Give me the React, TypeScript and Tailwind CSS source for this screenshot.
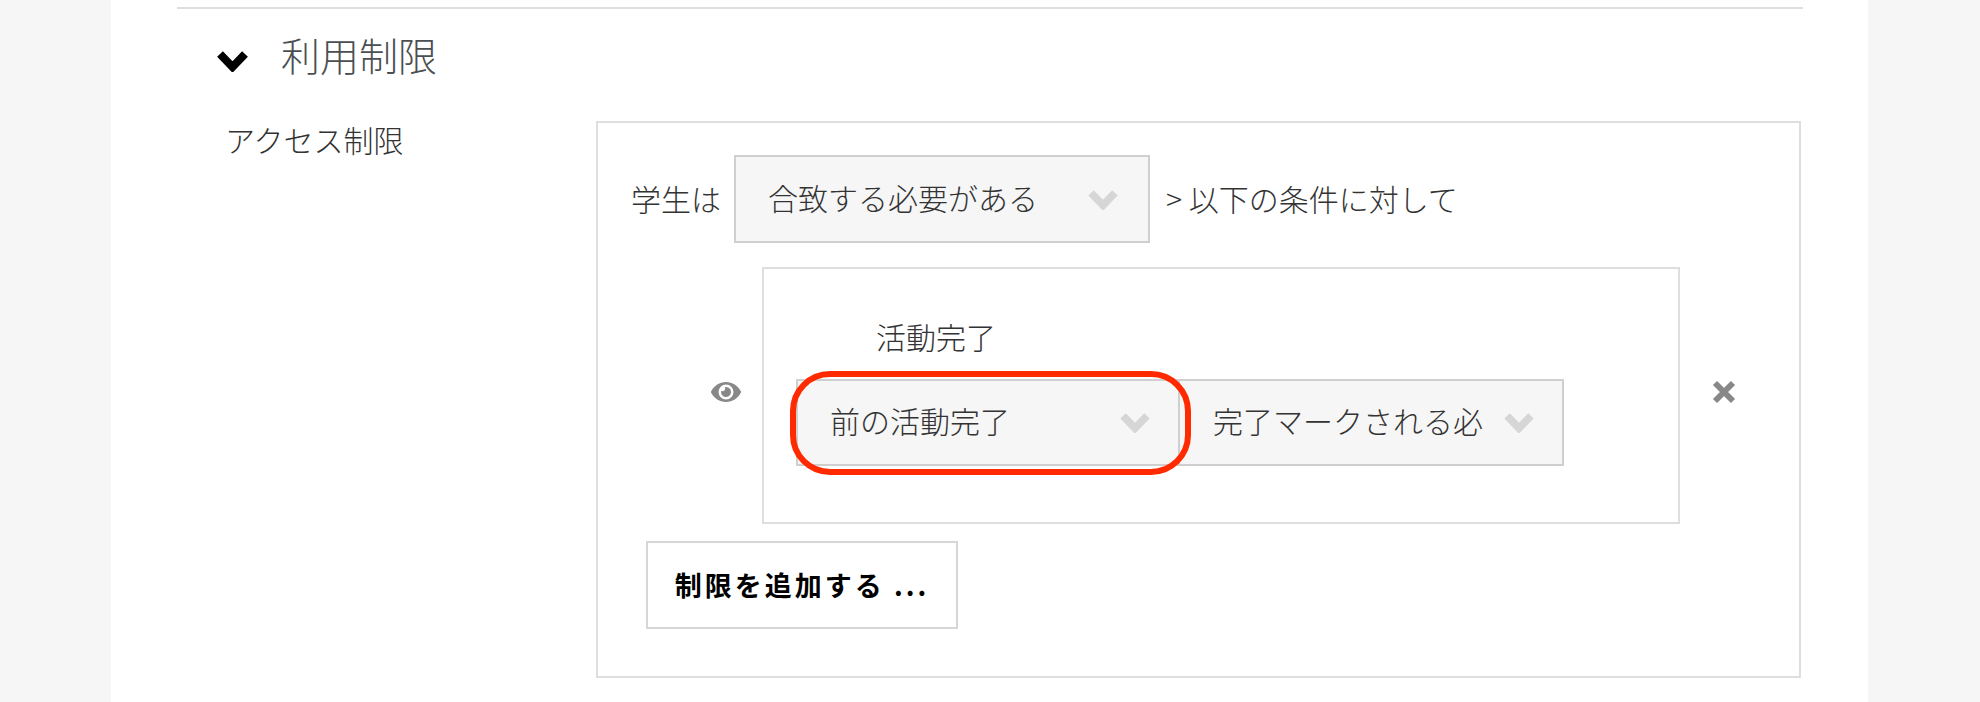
import { FaEye } from "react-icons/fa";

const font = "[font-family:'Noto_Sans_CJK_JP','Liberation_Sans',sans-serif]";

function Chevron({ className }: { className: string }) {
  return (
    <svg viewBox="0 0 32 22" fill="none" stroke="currentColor" strokeWidth={8} className={className} aria-hidden>
      <path d="M3.500 4 16 17 28.500 4" />
    </svg>
  );
}

function Select({ label, className }: { label: string; className: string }) {
  return (
    <div className={`flex items-center justify-between border-2 border-[#cfcfcf] bg-[#f6f6f6] ${className}`}>
      <span className="mb-[5px] whitespace-nowrap">{label}</span>
      <Chevron className="h-[21px] w-[32px] shrink-0 text-[#d6d6d6]" />
    </div>
  );
}

export default function App() {
  return (
    <div className={`h-[702px] overflow-hidden bg-[#f6f6f6] text-[30px] font-light leading-[40px] text-[#333333] ${font}`}>
      <div className="ml-[111px] h-full w-[1757px] bg-white pl-[66px] pt-[7px]">
        <div className="w-[1626px]">
          <div className="h-[2px] bg-[#dedede]" />

          <div className="flex h-[112px] items-start pl-[39px] pt-[17px]">
            <Chevron className="mt-[24px] h-[22px] w-[33px] text-black" />
            <h2 className="ml-[32px] text-[39px] font-light leading-[56px] text-[#4b4f52]">利用制限</h2>
          </div>

          <div className="flex items-start">
            <div className="ml-[48px] w-[371px] leading-[36px]">アクセス制限</div>

            <div className="h-[557px] w-[1205px] border-2 border-[#dedede] pl-[33px] pt-[32px]">
              <div className="flex items-center">
                <span className="mb-[2px]">学生は</span>
                <Select label="合致する必要がある" className="ml-[13px] h-[88px] w-[416px] pl-[32px] pr-[29px]" />
                <span className="mb-[2px] ml-[16px]">&gt; 以下の条件に対して</span>
              </div>

              <div className="ml-[80px] mt-[24px] flex items-center">
                <FaEye className="mt-[-7px] h-[30px] w-[30px] shrink-0 text-[#888888]" />
                <div className="ml-[21px] h-[257px] w-[918px] shrink-0 border-2 border-[#dedede] pl-[32px] pt-[47px]">
                  <div className="ml-[80px] h-[63px]">活動完了</div>
                  <div className="flex">
                    <div className="relative">
                      <Select label="前の活動完了" className="h-[87px] w-[384px] pl-[32px] pr-[27px]" />
                      <div className="absolute bottom-[-9px] left-[-6px] right-[-11px] top-[-8px] rounded-[40px] border-[6px] border-[#ff2a00]" />
                    </div>
                    <Select label="完了マークされる必" className="h-[87px] w-[384px] border-l-0 pl-[33px] pr-[27px]" />
                  </div>
                </div>
                <svg viewBox="0 0 24 24" stroke="#888888" strokeWidth={6} className="ml-[32px] mt-[-7px] h-[24px] w-[24px]" aria-hidden>
                  <path d="M3 3 21 21M21 3 3 21" />
                </svg>
              </div>

              <button
                type="button"
                className="ml-[15px] mt-[17px] h-[88px] w-[312px] border-2 border-[#d6d6d6] bg-white text-[27px] font-bold tracking-[3px] text-black"
              >
                制限を追加する ...
              </button>
            </div>
          </div>
        </div>
      </div>
    </div>
  );
}
